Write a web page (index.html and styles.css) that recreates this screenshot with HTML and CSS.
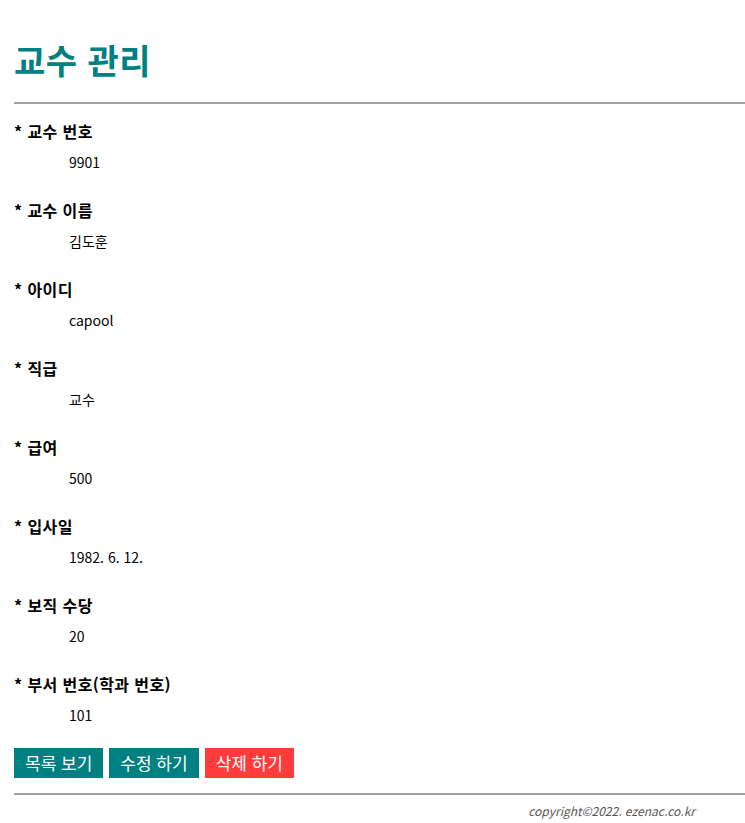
FILE: index.html
```html
<!DOCTYPE html>
<html lang="ko">
<head>
<meta charset="utf-8">
<title>교수 관리</title>
<link rel="stylesheet" href="styles.css">
</head>
<body>
<div class="page">
  <h1 class="title">교수 관리</h1>
  <hr class="rule">
  <dl class="details">
    <div class="item"><dt>* 교수 번호</dt><dd>9901</dd></div>
    <div class="item"><dt>* 교수 이름</dt><dd>김도훈</dd></div>
    <div class="item"><dt>* 아이디</dt><dd>capool</dd></div>
    <div class="item"><dt>* 직급</dt><dd>교수</dd></div>
    <div class="item"><dt>* 급여</dt><dd>500</dd></div>
    <div class="item"><dt>* 입사일</dt><dd>1982. 6. 12.</dd></div>
    <div class="item"><dt>* 보직 수당</dt><dd>20</dd></div>
    <div class="item"><dt>* 부서 번호(학과 번호)</dt><dd>101</dd></div>
  </dl>
  <div class="actions">
    <button class="btn btn-teal" type="button">목록 보기</button>
    <button class="btn btn-teal" type="button">수정 하기</button>
    <button class="btn btn-red" type="button">삭제 하기</button>
  </div>
  <hr class="rule rule-bottom">
  <footer class="footer">copyright©2022. ezenac.co.kr</footer>
</div>
</body>
</html>
```

FILE: styles.css
```css
html, body {
  margin: 0;
  padding: 0;
  background: #fff;
}
body {
  font-family: "Noto Sans CJK KR", "Noto Sans", sans-serif;
  color: #000;
}
.page {
  padding: 40px 0 0 14px;
}
.title {
  margin: 0;
  font-size: 34px;
  line-height: 40px;
  font-weight: 700;
  color: #008080;
  letter-spacing: 0.5px;
}
.rule {
  margin: 22px 0 0 0;
  border: 0;
  height: 2px;
  background: #a0a0a0;
}
.details {
  margin: 17px 0 0 0;
  padding: 0;
}
.item {
  display: flex;
  flex-direction: column;
  gap: 11px;
  margin-bottom: 28px;
}
.item:last-child {
  margin-bottom: 0;
}
.details dt {
  font-size: 16px;
  line-height: 20px;
  font-weight: 700;
  letter-spacing: 0.4px;
}
.details dd {
  margin: 0 0 0 55px;
  font-size: 14px;
  line-height: 20px;
}
.actions {
  display: flex;
  gap: 6px;
  margin-top: 23px;
}
.btn {
  border: 0;
  height: 30px;
  padding: 0 11px;
  font-family: inherit;
  font-size: 17px;
  color: #fff;
  line-height: 30px;
}
.btn-teal { background: #008080; }
.btn-red { background: #ff3b3b; }
.rule-bottom {
  margin-top: 15px;
}
.footer {
  text-align: right;
  padding-right: 50px;
  margin-top: 8px;
  font-size: 12px;
  line-height: 16px;
  font-style: italic;
  color: #555;
}
```
